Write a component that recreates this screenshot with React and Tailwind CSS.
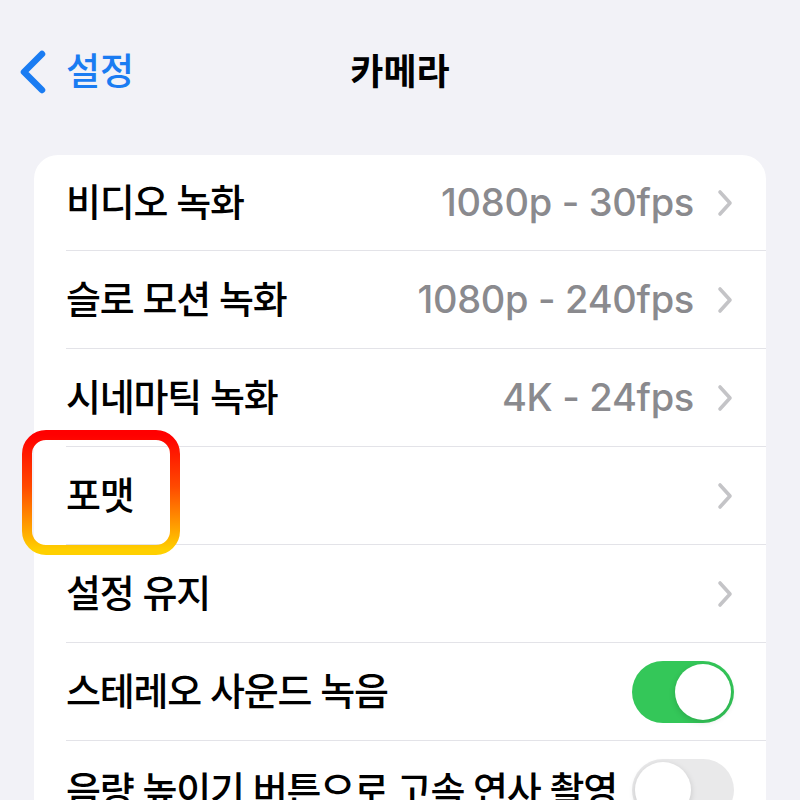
import React from "react";

const font = { fontFamily: '"Inter", "Noto Sans CJK KR", sans-serif' };

function Chevron() {
  return (
    <svg width="18" height="28" viewBox="0 0 18 28" className="shrink-0">
      <path d="M4 3 L14 14 L4 25" fill="none" stroke="#c4c4c7" strokeWidth="3.6" strokeLinecap="round" strokeLinejoin="round" />
    </svg>
  );
}

function Toggle({ on }) {
  return (
    <div className={on ? "w-[102px] h-[62px] rounded-full bg-[#34c759] p-[3px] flex justify-end shrink-0" : "w-[102px] h-[62px] rounded-full bg-[#e9e9ea] p-[3px] flex justify-start shrink-0"}>
      <div className="w-[56px] h-[56px] rounded-full bg-white shadow-[0_2px_6px_rgba(0,0,0,0.15)]" />
    </div>
  );
}

function Row({ label, value, chevron, toggle, last, first }) {
  const h = first ? "h-[96px]" : "h-[98px]";
  return (
    <div className="pl-[32px]">
      <div className={`flex items-center ${h} pr-[32px] ${last ? "" : "border-b border-[#e3e3e8]"}`}>
        <div className="flex-1 min-w-0 text-[38px] font-medium text-black tracking-[-1.2px] whitespace-nowrap">{label}</div>
        {value && <div className="text-[38px] font-medium text-[#8a8a8e] mr-[22px] tracking-[-0.3px] whitespace-nowrap">{value}</div>}
        {chevron && <Chevron />}
        {toggle !== undefined && <div className="ml-[18px]"><Toggle on={toggle} /></div>}
      </div>
    </div>
  );
}

export default function App() {
  return (
    <div className="w-[800px] h-[800px] bg-[#f2f2f7] overflow-hidden relative" style={font}>
      <div className="h-[155px] pt-[42px]">
        <div className="grid grid-cols-[1fr_auto_1fr] items-center h-[60px]">
          <div className="flex items-center pl-[18px]">
            <svg width="30" height="46" viewBox="0 0 30 46">
              <path d="M24 5 L6 23 L24 41" fill="none" stroke="#1a7cf2" strokeWidth="6.5" strokeLinecap="round" strokeLinejoin="round" />
            </svg>
            <span className="ml-[18px] text-[37px] text-[#1a7cf2] font-medium">설정</span>
          </div>
          <div className="text-[36px] font-bold text-black">카메라</div>
          <div />
        </div>
      </div>
      <div className="ml-[34px] w-[732px] bg-white rounded-[24px]">
        <Row first label="비디오 녹화" value="1080p - 30fps" chevron />
        <Row label="슬로 모션 녹화" value="1080p - 240fps" chevron />
        <Row label="시네마틱 녹화" value="4K - 24fps" chevron />
        <Row label="포맷" chevron />
        <Row label="설정 유지" chevron />
        <Row label="스테레오 사운드 녹음" toggle={true} />
        <Row label="음량 높이기 버튼으로 고속 연사 촬영" toggle={false} last />
      </div>
      <svg className="absolute left-[22px] top-[430px]" width="158" height="125" viewBox="0 0 158 125">
        <defs>
          <linearGradient id="hl" x1="0" y1="0" x2="0" y2="1">
            <stop offset="0" stopColor="#ff0000" />
            <stop offset="0.45" stopColor="#ff4a00" />
            <stop offset="1" stopColor="#ffd000" />
          </linearGradient>
        </defs>
        <rect x="5" y="5" width="148" height="115" rx="19" ry="19" fill="none" stroke="url(#hl)" strokeWidth="10" />
      </svg>
    </div>
  );
}
